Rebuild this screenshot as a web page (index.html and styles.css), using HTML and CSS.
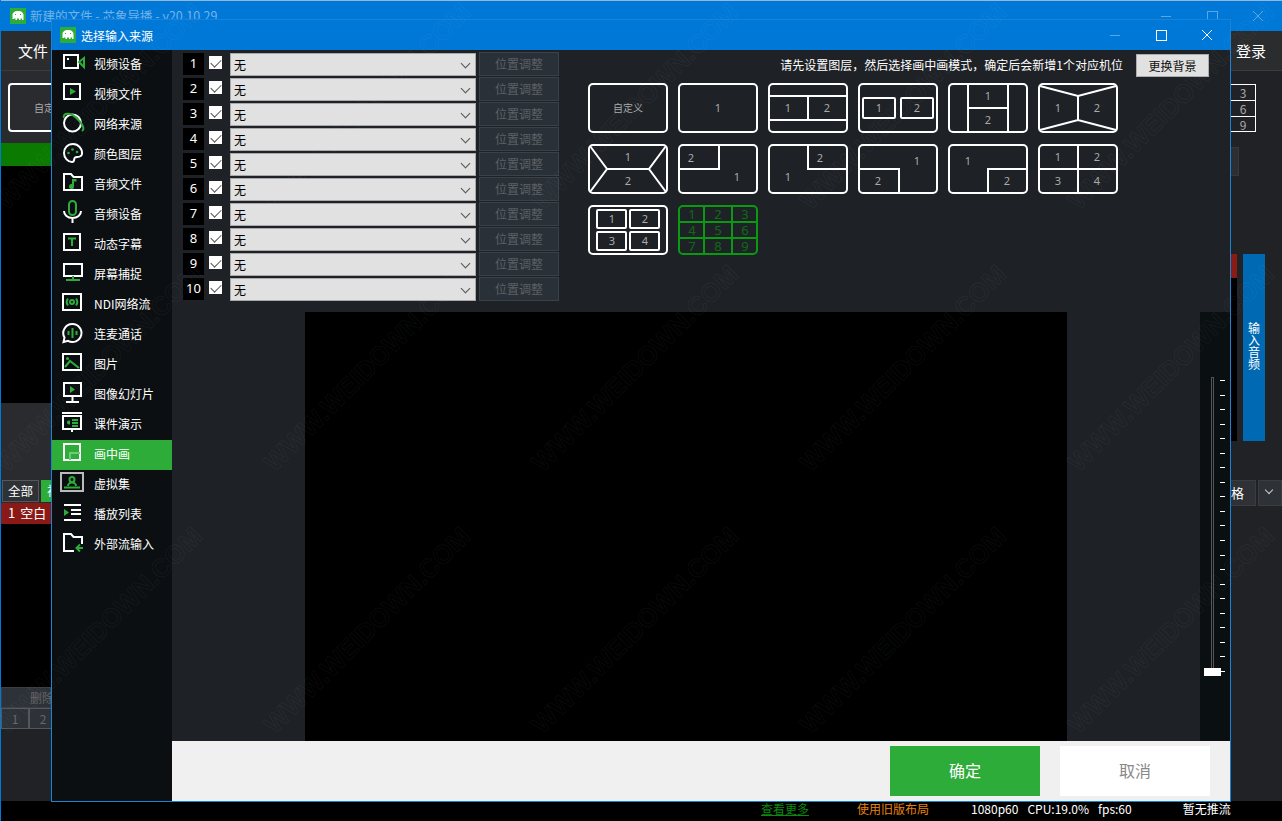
FILE: index.html
```html
<!DOCTYPE html>
<html lang="zh-CN">

<head>
    <meta charset="UTF-8">
    <title>选择输入来源</title>
    <link rel="stylesheet" href="styles.css">
</head>

<body>
    <div class="app">
        <div class="titlebar main-title">
            <svg class="logo" viewBox="0 0 16 16"><rect width="16" height="16" fill="#2eac3a"/><path d="M2.500 11V7c0-2.500 2.500-4 5.500-4s5.500 1.500 5.500 4v5H12v-1.500h-1.500V12H9v-1.500H7V12H5.500v-1.500H4V11z" fill="#fff"/><path d="M5 6.500h1M10 6.500h1" stroke="#2eac3a"/></svg>
            <span class="title-text">新建的文件 - 芯象导播 - v20.10.29</span>
            <div class="win-btns faded">
                <svg viewBox="0 0 46 30"><path d="M18 15.500h10" stroke="#fff" fill="none"/></svg>
                <svg viewBox="0 0 46 30"><rect x="18.500" y="10.500" width="10" height="10" stroke="#fff" fill="none"/></svg>
                <svg viewBox="0 0 46 30"><path d="M18 10l10 10M28 10l-10 10" stroke="#fff" fill="none"/></svg>
            </div>
        </div>
        <div class="menubar">
            <span>文件</span>
            <span>登录</span>
        </div>
        <div class="stage">
            <div class="left-col">
                <div class="tool-strip"><div class="tool-btn">自定义</div></div>
                <div class="green-bar"></div>
                <div class="black-a"></div>
                <div class="gray-a"></div>
                <div class="tabs">
                    <span class="tab">全部</span>
                    <span class="tab tab-on">视频</span>
                </div>
                <div class="red-row">1 空白</div>
                <div class="black-b"></div>
                <div class="del-row">删除</div>
                <div class="num-row"><span>1</span><span>2</span></div>
            </div>
            <div class="right-col">
                <div class="key-box">
                    <span>3</span>
                    <span>6</span>
                    <span>9</span>
                </div>
                <div class="dim-box"></div>
                <div class="audio-wrap">
                    <div class="meter"><div class="meter-top"></div></div>
                    <div class="audio-btn">输入音频</div>
                </div>
                <div class="right-tabs">
                    <span class="tab tab-grid">格</span>
                    <span class="tab tab-more"><i class="chev chev-light"></i></span>
                </div>
            </div>
        </div>
        <div class="statusbar">
            <span class="st-more">查看更多</span>
            <span class="st-old">使用旧版布局</span>
            <span class="st-res">1080p60</span>
            <span class="st-cpu">CPU:19.0%</span>
            <span class="st-fps">fps:60</span>
            <span class="st-push">暂无推流</span>
        </div>

        <div class="dialog">
            <div class="titlebar dialog-title">
                <svg class="logo" viewBox="0 0 16 16"><rect width="16" height="16" fill="#2eac3a"/><path d="M2.500 11V7c0-2.500 2.500-4 5.500-4s5.500 1.500 5.500 4v5H12v-1.500h-1.500V12H9v-1.500H7V12H5.500v-1.500H4V11z" fill="#fff"/><path d="M5 6.500h1M10 6.500h1" stroke="#2eac3a"/></svg>
                <span class="dialog-name">选择输入来源</span>
                <div class="win-btns">
                    <svg class="faded" viewBox="0 0 46 30"><path d="M18 15.500h10" stroke="#fff" fill="none"/></svg>
                    <svg viewBox="0 0 46 30"><rect x="18.500" y="10.500" width="10" height="10" stroke="#fff" fill="none"/></svg>
                    <svg viewBox="0 0 46 30"><path d="M18 10l10 10M28 10l-10 10" stroke="#fff" fill="none"/></svg>
                </div>
            </div>
            <div class="dialog-body">
                <div class="sidebar">
                    <div class="side-item">
                        <svg viewBox="0 0 24 24"><rect x="2" y="4" width="14" height="13" class="w"/><rect x="5" y="7" width="2" height="2" fill="#fff"/><path d="M17 11l5-4v9z" class="g"/></svg>
                        视频设备
                    </div>
                    <div class="side-item">
                        <svg viewBox="0 0 24 24"><rect x="2" y="3" width="16" height="15" class="w"/><path d="M8 7l6 3.500-6 3.500z" fill="#2eac3a"/></svg>
                        视频文件
                    </div>
                    <div class="side-item">
                        <svg viewBox="0 0 24 24"><circle cx="10.500" cy="12" r="8.500" class="w"/><path d="M2 7C0 2 8 1 14 6.500S23.500 18 20 20" class="g"/></svg>
                        网络来源
                    </div>
                    <div class="side-item">
                        <svg viewBox="0 0 24 24"><path d="M11 3C5.500 3 2 7 2 12s4 9 8 9c3 0 1.500-3.500 3-4.500s6.500 .5 7-3.500C20.500 8 16.500 3 11 3z" class="w"/><circle cx="6.500" cy="12" r="1.300" fill="#2eac3a"/><circle cx="10.500" cy="8.500" r="1.300" fill="#2eac3a"/><circle cx="15" cy="11" r="1.300" fill="#2eac3a"/></svg>
                        颜色图层
                    </div>
                    <div class="side-item">
                        <svg viewBox="0 0 24 24"><path d="M2 19V3h7l2.500 3H20v13z" class="w"/><path d="M10 8h4.500v2.500H12v5a2.500 2.500 0 1 1-2-2.400z" fill="#2eac3a"/></svg>
                        音频文件
                    </div>
                    <div class="side-item">
                        <svg viewBox="0 0 24 24"><rect x="7" y="0" width="7" height="14" rx="3.500" class="g"/><path d="M2 10c0 4 3.500 7 8.500 7s8.500-3 8.500-7M10.500 17v5" class="w"/></svg>
                        音频设备
                    </div>
                    <div class="side-item">
                        <svg viewBox="0 0 24 24"><rect x="2" y="3" width="16" height="16" class="w"/><path d="M6 7.500h8M10 7.500V15" class="g"/></svg>
                        动态字幕
                    </div>
                    <div class="side-item">
                        <svg viewBox="0 0 24 24"><rect x="2" y="3" width="18" height="12" class="w"/><path d="M11 15v4M4 19h14" class="g"/></svg>
                        屏幕捕捉
                    </div>
                    <div class="side-item">
                        <svg viewBox="0 0 24 24"><rect x="1" y="3" width="18" height="16" class="w"/><circle cx="10" cy="11" r="2" class="g"/><path d="M6 7.500c-1.500 2-1.500 5 0 7M14 7.500c1.500 2 1.500 5 0 7" class="g"/></svg>
                        NDI网络流
                    </div>
                    <div class="side-item">
                        <svg viewBox="0 0 24 24"><path d="M10.500 3a9 9 0 1 1-4.500 16.800L1.500 21l1-4.500A9 9 0 0 1 10.500 3z" class="w"/><path d="M6.500 10v4M10.500 7v10M14.500 10v4" class="g"/></svg>
                        连麦通话
                    </div>
                    <div class="side-item">
                        <svg viewBox="0 0 24 24"><rect x="1" y="3" width="18" height="16" class="w"/><circle cx="5.500" cy="7.500" r="1.500" fill="#2eac3a"/><path d="M3 16l5-6 9 7" class="g"/></svg>
                        图片
                    </div>
                    <div class="side-item">
                        <svg viewBox="0 0 24 24"><rect x="2" y="2" width="17" height="13" class="w"/><path d="M8 5l5 3.500L8 12z" fill="#2eac3a"/><path d="M10.500 15v5M4 21h13" class="w"/></svg>
                        图像幻灯片
                    </div>
                    <div class="side-item">
                        <svg viewBox="0 0 24 24"><path d="M0 2h20" class="w"/><rect x="1" y="5" width="18" height="13" class="w"/><path d="M10 18v3" class="w"/><path d="M5 11.500a2 2 0 0 1 3-1.800v3.500a2 2 0 0 1-3-1.700z" fill="#2eac3a"/><path d="M10 9h6M10 12h6M10 15h6" class="g"/></svg>
                        课件演示
                    </div>
                    <div class="side-item side-active">
                        <svg viewBox="0 0 24 24"><rect x="2" y="3" width="16" height="16" class="w"/><path d="M8 19v-7h10" stroke="#6fcb78" stroke-width="2" fill="none"/></svg>
                        画中画
                    </div>
                    <div class="side-item">
                        <svg viewBox="0 0 24 24"><rect x="-1" y="2" width="22" height="18" stroke="#bbb" stroke-width="2" fill="none"/><circle cx="10" cy="8.500" r="2.500" class="g"/><path d="M6 15c0-2 2-3.500 4-3.500s4 1.500 4 3.500M2 16.500h16" class="g"/></svg>
                        虚拟集
                    </div>
                    <div class="side-item">
                        <svg viewBox="0 0 24 24"><path d="M2 4h17M9 9h10M9 13h10M2 19h17" class="w"/><path d="M2 8l5 3.500L2 15z" fill="#2eac3a"/></svg>
                        播放列表
                    </div>
                    <div class="side-item">
                        <svg viewBox="0 0 24 24"><path d="M12 20H2V3h7l2.500 3H20v7" class="w"/><path d="M14 17h7M18 13.500L14.500 17l3.500 3.500" class="g"/></svg>
                        外部流输入
                    </div>
                </div>
                <div class="content">
                    <div class="top-panel">
                        <div class="layers">
                            <div class="layer"><span class="layer-no">1</span><span class="check"></span><div class="combo">无</div><div class="adjust">位置调整</div></div>
                            <div class="layer"><span class="layer-no">2</span><span class="check"></span><div class="combo">无</div><div class="adjust">位置调整</div></div>
                            <div class="layer"><span class="layer-no">3</span><span class="check"></span><div class="combo">无</div><div class="adjust">位置调整</div></div>
                            <div class="layer"><span class="layer-no">4</span><span class="check"></span><div class="combo">无</div><div class="adjust">位置调整</div></div>
                            <div class="layer"><span class="layer-no">5</span><span class="check"></span><div class="combo">无</div><div class="adjust">位置调整</div></div>
                            <div class="layer"><span class="layer-no">6</span><span class="check"></span><div class="combo">无</div><div class="adjust">位置调整</div></div>
                            <div class="layer"><span class="layer-no">7</span><span class="check"></span><div class="combo">无</div><div class="adjust">位置调整</div></div>
                            <div class="layer"><span class="layer-no">8</span><span class="check"></span><div class="combo">无</div><div class="adjust">位置调整</div></div>
                            <div class="layer"><span class="layer-no">9</span><span class="check"></span><div class="combo">无</div><div class="adjust">位置调整</div></div>
                            <div class="layer"><span class="layer-no">10</span><span class="check"></span><div class="combo">无</div><div class="adjust">位置调整</div></div>
                        </div>
                        <div class="modes">
                            <div class="note-row">
                                <span class="note">请先设置图层，然后选择画中画模式，确定后会新增1个对应机位</span>
                                <div class="bg-btn">更换背景</div>
                            </div>
                            <div class="tiles">
                                <svg class="tile" viewBox="0 0 80 50"><rect x="1" y="1" width="78" height="48" rx="4"/><text class="tile-word" x="40" y="29">自定义</text></svg>
                                <svg class="tile" viewBox="0 0 80 50"><rect x="1" y="1" width="78" height="48" rx="4"/><text x="40" y="29">1</text></svg>
                                <svg class="tile" viewBox="0 0 80 50"><rect x="1" y="1" width="78" height="48" rx="4"/><path d="M1 13h78M1 37h78M40 13v24"/><text x="20" y="29">1</text><text x="59" y="29">2</text></svg>
                                <svg class="tile" viewBox="0 0 80 50"><rect x="1" y="1" width="78" height="48" rx="4"/><rect x="5" y="15" width="32" height="20" rx="1"/><rect x="43" y="15" width="32" height="20" rx="1"/><text x="21" y="29">1</text><text x="59" y="29">2</text></svg>
                                <svg class="tile" viewBox="0 0 80 50"><rect x="1" y="1" width="78" height="48" rx="4"/><path d="M20 1v48M60 1v48M20 25h40"/><text x="40" y="17">1</text><text x="40" y="41">2</text></svg>
                                <svg class="tile" viewBox="0 0 80 50"><rect x="1" y="1" width="78" height="48" rx="4"/><path d="M2 3l38 10 38-10M2 47l38-10 38 10M40 13v24"/><text x="20" y="29">1</text><text x="59" y="29">2</text></svg>
                                <svg class="tile" viewBox="0 0 80 50"><rect x="1" y="1" width="78" height="48" rx="4"/><path d="M2 2l17 23L2 48M78 2L61 25l17 23M19 25h42"/><text x="40" y="17">1</text><text x="40" y="41">2</text></svg>
                                <svg class="tile" viewBox="0 0 80 50"><rect x="1" y="1" width="78" height="48" rx="4"/><path d="M1 25h40V1"/><text x="13" y="18">2</text><text x="59" y="37">1</text></svg>
                                <svg class="tile" viewBox="0 0 80 50"><rect x="1" y="1" width="78" height="48" rx="4"/><path d="M79 25H40V1"/><text x="52" y="18">2</text><text x="20" y="37">1</text></svg>
                                <svg class="tile" viewBox="0 0 80 50"><rect x="1" y="1" width="78" height="48" rx="4"/><path d="M1 25h40v24"/><text x="59" y="21">1</text><text x="20" y="41">2</text></svg>
                                <svg class="tile" viewBox="0 0 80 50"><rect x="1" y="1" width="78" height="48" rx="4"/><path d="M79 25H40v24"/><text x="20" y="21">1</text><text x="59" y="41">2</text></svg>
                                <svg class="tile" viewBox="0 0 80 50"><rect x="1" y="1" width="78" height="48" rx="4"/><path d="M1 25h78M40 1v48"/><text x="20" y="17">1</text><text x="59" y="17">2</text><text x="20" y="41">3</text><text x="59" y="41">4</text></svg>
                                <svg class="tile" viewBox="0 0 80 50"><rect x="1" y="1" width="78" height="48" rx="4"/><rect x="9" y="5" width="29" height="18" rx="1"/><rect x="42" y="5" width="29" height="18" rx="1"/><rect x="9" y="27" width="29" height="18" rx="1"/><rect x="42" y="27" width="29" height="18" rx="1"/><text x="24" y="18">1</text><text x="57" y="18">2</text><text x="24" y="40">3</text><text x="57" y="40">4</text></svg>
                                <svg class="tile tile-green" viewBox="0 0 80 50"><rect x="1" y="1" width="78" height="48" rx="4"/><path d="M26 1v48M54 1v48M1 17h78M1 33h78"/><text x="14" y="14">1</text><text x="40" y="14">2</text><text x="67" y="14">3</text><text x="14" y="30">4</text><text x="40" y="30">5</text><text x="67" y="30">6</text><text x="14" y="46">7</text><text x="40" y="46">8</text><text x="67" y="46">9</text></svg>
                            </div>
                        </div>
                    </div>
                    <div class="preview-wrap">
                        <div class="preview-area">
                            <div class="preview"></div>
                        </div>
                        <div class="slider-panel">
                            <div class="slider">
                                <div class="track"></div>
                                <div class="ticks">
                                    <i></i><i></i><i></i><i></i><i></i><i></i><i></i>
                                    <i></i><i></i><i></i><i></i><i></i><i></i><i></i>
                                    <i></i><i></i><i></i><i></i><i></i><i></i><i></i>
                                </div>
                                <div class="thumb"></div>
                            </div>
                        </div>
                    </div>
                    <div class="footer">
                        <div class="btn-ok">确定</div>
                        <div class="btn-cancel">取消</div>
                    </div>
                </div>
            </div>
        </div>

        <!-- site watermark on top of everything -->
        <div class="watermark">
            <span>WWW.WEIDOWN.COM</span><span>WWW.WEIDOWN.COM</span><span>WWW.WEIDOWN.COM</span><span>WWW.WEIDOWN.COM</span><span>WWW.WEIDOWN.COM</span>
            <span>WWW.WEIDOWN.COM</span><span>WWW.WEIDOWN.COM</span><span>WWW.WEIDOWN.COM</span><span>WWW.WEIDOWN.COM</span><span>WWW.WEIDOWN.COM</span>
            <span>WWW.WEIDOWN.COM</span><span>WWW.WEIDOWN.COM</span><span>WWW.WEIDOWN.COM</span><span>WWW.WEIDOWN.COM</span><span>WWW.WEIDOWN.COM</span>
        </div>
    </div>
</body>

</html>
```

FILE: styles.css
```css
* {
    box-sizing: border-box;
}

html,
body {
    margin: 0;
    padding: 0;
    background: #000;
}

body {
    font-family: "Noto Sans CJK SC", "Noto Sans", sans-serif;
    font-size: 12px;
    color: #fff;
}

.app {
    position: relative;
    width: 1282px;
    height: 821px;
    overflow: hidden;
    display: flex;
    flex-direction: column;
    background: #212225;
    border-left: 1px solid #0078d7;
}

/* title bars */
.titlebar {
    display: flex;
    align-items: center;
    background: #0078d7;
    flex-shrink: 0;
}

.main-title {
    height: 31px;
    padding-left: 9px;
    border-top: 1px solid #8fb8dc;
}

.title-text {
    margin-left: 4px;
    margin-bottom: 2px;
    font-size: 12.500px;
    color: #72b3ea;
}

.logo {
    width: 16px;
    height: 16px;
}

.win-btns {
    margin-left: auto;
    display: flex;
}

.win-btns svg {
    width: 46px;
    height: 30px;
    display: block;
}

.faded {
    opacity: 0.35;
}

.main-title .win-btns {
    margin-right: 1px;
}

.menubar {
    height: 40px;
    flex-shrink: 0;
    display: flex;
    justify-content: space-between;
    align-items: center;
    padding: 0 16px 0 17px;
    font-size: 15px;
    background: #2b2c2e;
    border-bottom: 1px solid #3a3b3e;
}

/* main window behind the dialog */
.stage {
    flex: 1;
    display: flex;
    justify-content: space-between;
    min-height: 0;
}

.left-col {
    width: 50px;
    display: flex;
    flex-direction: column;
    overflow: hidden;
}

.tool-strip {
    height: 72px;
    padding: 12px 0 0 7px;
    background: #2a2b2e;
}

.tool-btn {
    width: 80px;
    height: 49px;
    border: 2px solid #fff;
    border-radius: 4px;
    font-size: 10px;
    line-height: 45px;
    color: #aaa;
    padding-left: 24px;
    white-space: nowrap;
}

.green-bar {
    height: 23px;
    background: #0b7a00;
}

.black-a {
    height: 237px;
    background: #000;
}

.gray-a {
    height: 75px;
    background: #2a2b2e;
}

.tabs {
    height: 25px;
    padding: 2px 0 0 1px;
    display: flex;
    gap: 2px;
    background: #2a2b2e;
    white-space: nowrap;
    font-size: 12.500px;
}

.tab {
    display: block;
    height: 22px;
    line-height: 20px;
    padding: 0 5px;
    border: 1px solid #55575a;
    background: #2e3135;
}

.tab-on {
    background: #2eac3a;
    border-color: #2eac3a;
    flex-shrink: 0;
}

.red-row {
    height: 21px;
    line-height: 20px;
    padding-left: 7px;
    background: #8b1a16;
    white-space: nowrap;
    font-size: 13px;
    word-spacing: 2px;
}

.black-b {
    height: 163px;
    background: #000;
}

.del-row {
    height: 21px;
    line-height: 20px;
    padding-left: 28px;
    background: #2d3138;
    color: #666;
    white-space: nowrap;
    border: 1px solid #3b3e43;
}

.num-row {
    height: 21px;
    display: flex;
    color: #666;
}

.num-row span {
    width: 28px;
    flex-shrink: 0;
    text-align: center;
    line-height: 19px;
    border: 1px solid #55575a;
    background: #2d3138;
}

.right-col {
    width: 51px;
    display: flex;
    flex-direction: column;
}

.key-box {
    width: 25px;
    margin-top: 13px;
    height: 48px;
    border: 1px solid #fff;
    border-left: 0;
    display: flex;
    flex-direction: column;
    color: #aaa;
    text-align: center;
}

.key-box span {
    flex: 1;
    line-height: 15px;
    border-bottom: 1px solid #fff;
}

.key-box span:last-child {
    border-bottom: 0;
}

.dim-box {
    width: 8px;
    height: 29px;
    margin-top: 15px;
    background: #2c2e31;
    border: 1px solid #35373b;
    border-left: 0;
}

.audio-wrap {
    display: flex;
    margin-top: 78px;
    height: 187px;
}

.meter {
    width: 6px;
    background: #000;
}

.meter-top {
    height: 24px;
    background: #8b1a16;
}

.audio-btn {
    width: 22px;
    margin-left: 6px;
    background: #0069b4;
    display: flex;
    align-items: center;
    justify-content: center;
    text-align: center;
    line-height: 12px;
    padding: 0 5px 4px;
}

.right-tabs {
    margin-top: 39px;
    display: flex;
    gap: 2px;
}

.tab-grid {
    width: 25px;
    height: 26px;
    line-height: 24px;
    padding: 0;
    border-left: 0;
    border-color: #3a3c40;
    font-size: 13px;
}

.tab-more {
    width: 24px;
    height: 26px;
    border-color: #3a3c40;
    position: relative;
}

.chev {
    display: block;
    width: 6px;
    height: 6px;
    border-right: 1px solid #555;
    border-bottom: 1px solid #555;
    transform: rotate(45deg);
}

.chev-light {
    border-color: #ccc;
    margin: 6px 0 0 2px;
}

.statusbar {
    height: 20px;
    flex-shrink: 0;
    display: flex;
    align-items: center;
    background: #000;
    padding: 0 0 5px 760px;
    white-space: nowrap;
}

.st-more {
    color: #0a8a0a;
    text-decoration: underline;
}

.st-old {
    margin-left: 48px;
    color: #e8820c;
}

.st-res {
    margin-left: 42px;
}

.st-cpu {
    margin-left: 9px;
}

.st-fps {
    margin-left: 9px;
}

.st-push {
    margin-left: 51px;
}

/* dialog window */
.dialog {
    position: absolute;
    left: 50px;
    top: 19px;
    width: 1180px;
    height: 783px;
    border: 1px solid #1883d7;
    display: flex;
    flex-direction: column;
    background: #1e2226;
}

.dialog-title {
    height: 30px;
    padding-left: 8px;
}

.dialog-name {
    margin-left: 5px;
}

.dialog-body {
    flex: 1;
    display: flex;
    min-height: 0;
}

.sidebar {
    width: 120px;
    flex-shrink: 0;
    background: #0b0f12;
}

.side-item {
    height: 30px;
    display: flex;
    align-items: center;
    gap: 8px;
    padding: 0 0 4px 10px;
    white-space: nowrap;
}

.side-item svg {
    width: 24px;
    height: 24px;
    flex-shrink: 0;
    overflow: visible;
}

.side-item .w {
    fill: none;
    stroke: #fff;
    stroke-width: 2;
}

.side-item .g {
    fill: none;
    stroke: #2eac3a;
    stroke-width: 2;
}

.side-active {
    background: #2eac3a;
}

.content {
    flex: 1;
    display: flex;
    flex-direction: column;
    min-width: 0;
}

.top-panel {
    height: 262px;
    flex-shrink: 0;
    display: flex;
    padding-left: 11px;
}

.layers {
    width: 376px;
    flex-shrink: 0;
    padding-top: 2px;
}

.layer {
    height: 25px;
    display: flex;
    align-items: flex-start;
}

.layer-no {
    width: 21px;
    height: 22px;
    margin-top: 1px;
    background: #000;
    text-align: center;
    line-height: 21px;
    font-family: "Noto Sans", sans-serif;
    font-size: 13px;
}

.check {
    position: relative;
    width: 13px;
    height: 13px;
    margin: 4px 0 0 5px;
    background: #fff;
    flex-shrink: 0;
}

.check::after {
    content: "";
    position: absolute;
    left: 4px;
    top: 1px;
    width: 5px;
    height: 9px;
    border-right: 1.500px solid #555;
    border-bottom: 1.500px solid #555;
    transform: rotate(45deg);
}

.combo {
    position: relative;
    width: 246px;
    height: 23px;
    margin: 1px 0 0 8px;
    padding-left: 3px;
    background: #e1e1e1;
    border: 1px solid #a8a8a8;
    color: #000;
    line-height: 21px;
}

.combo::after {
    content: "";
    position: absolute;
    right: 6px;
    top: 6px;
    width: 6px;
    height: 6px;
    border-right: 1px solid #555;
    border-bottom: 1px solid #555;
    transform: rotate(45deg);
}

.adjust {
    width: 80px;
    height: 24px;
    margin-left: 3px;
    background: #2a3037;
    border: 1px solid #3a4148;
    color: #5c6166;
    text-align: center;
    line-height: 22px;
}

.modes {
    margin-left: 29px;
    flex: 1;
}

.note-row {
    height: 33px;
    display: flex;
    justify-content: flex-end;
    align-items: flex-start;
    padding-right: 21px;
}

.note {
    margin-top: 6px;
    line-height: 17px;
    white-space: nowrap;
}

.bg-btn {
    width: 73px;
    height: 23px;
    margin: 4px 0 0 13px;
    background: #e1e1e1;
    border: 1px solid #adadad;
    color: #111;
    text-align: center;
    line-height: 21px;
}

.tiles {
    display: grid;
    grid-template-columns: repeat(6, 80px);
    grid-auto-rows: 50px;
    column-gap: 10px;
    row-gap: 11px;
}

.tile {
    display: block;
    width: 80px;
    height: 50px;
}

.tile rect,
.tile path {
    fill: none;
    stroke: #fff;
    stroke-width: 2;
}

.tile text {
    fill: #aaa;
    font-size: 11px;
    text-anchor: middle;
    font-family: "Noto Sans", sans-serif;
}

.tile .tile-word {
    font-size: 10px;
    font-family: "Noto Sans CJK SC", sans-serif;
}

.tile-green rect,
.tile-green path {
    stroke: #0a9a12;
}

.tile-green text {
    fill: #0d6b16;
    font-size: 13px;
}

.preview-wrap {
    flex: 1;
    display: flex;
    min-height: 0;
}

.preview-area {
    flex: 1;
    display: flex;
    justify-content: center;
}

.preview {
    width: 762px;
    background: #000;
}

.slider-panel {
    width: 30px;
    flex-shrink: 0;
    background: #0a0f12;
    padding-top: 65px;
}

.slider {
    position: relative;
    height: 299px;
    display: flex;
    padding-left: 11px;
}

.track {
    width: 3px;
    height: 293px;
    border: 1px solid #555;
    border-bottom: 0;
}

.ticks {
    margin: 3px 0 0 6px;
    height: 292px;
    display: flex;
    flex-direction: column;
    justify-content: space-between;
}

.ticks i {
    display: block;
    width: 5px;
    height: 1px;
    background: #fff;
}

.thumb {
    position: absolute;
    left: 4px;
    top: 291px;
    width: 17px;
    height: 8px;
    background: #fff;
}

.footer {
    height: 60px;
    flex-shrink: 0;
    display: flex;
    justify-content: flex-end;
    align-items: center;
    gap: 20px;
    padding-right: 20px;
    background: #f0f0f0;
    position: relative;
    z-index: 2;
}

.btn-ok,
.btn-cancel {
    width: 150px;
    height: 50px;
    text-align: center;
    line-height: 48px;
    font-size: 16px;
}

.btn-ok {
    background: #2eac3a;
}

.btn-cancel {
    background: #fff;
    color: #888;
}

/* diagonal site watermark */
.watermark {
    position: absolute;
    left: -40px;
    top: -21px;
    display: grid;
    grid-template-columns: repeat(5, 268px);
    grid-auto-rows: 262px;
    pointer-events: none;
    font-family: "Liberation Sans", sans-serif;
    font-size: 26px;
    font-weight: bold;
    white-space: nowrap;
}

.watermark span {
    display: block;
    width: 268px;
    text-align: center;
    line-height: 262px;
    color: transparent;
    -webkit-text-stroke: 1px rgba(255, 255, 255, 0.05);
    transform: rotate(-45deg);
}
```
